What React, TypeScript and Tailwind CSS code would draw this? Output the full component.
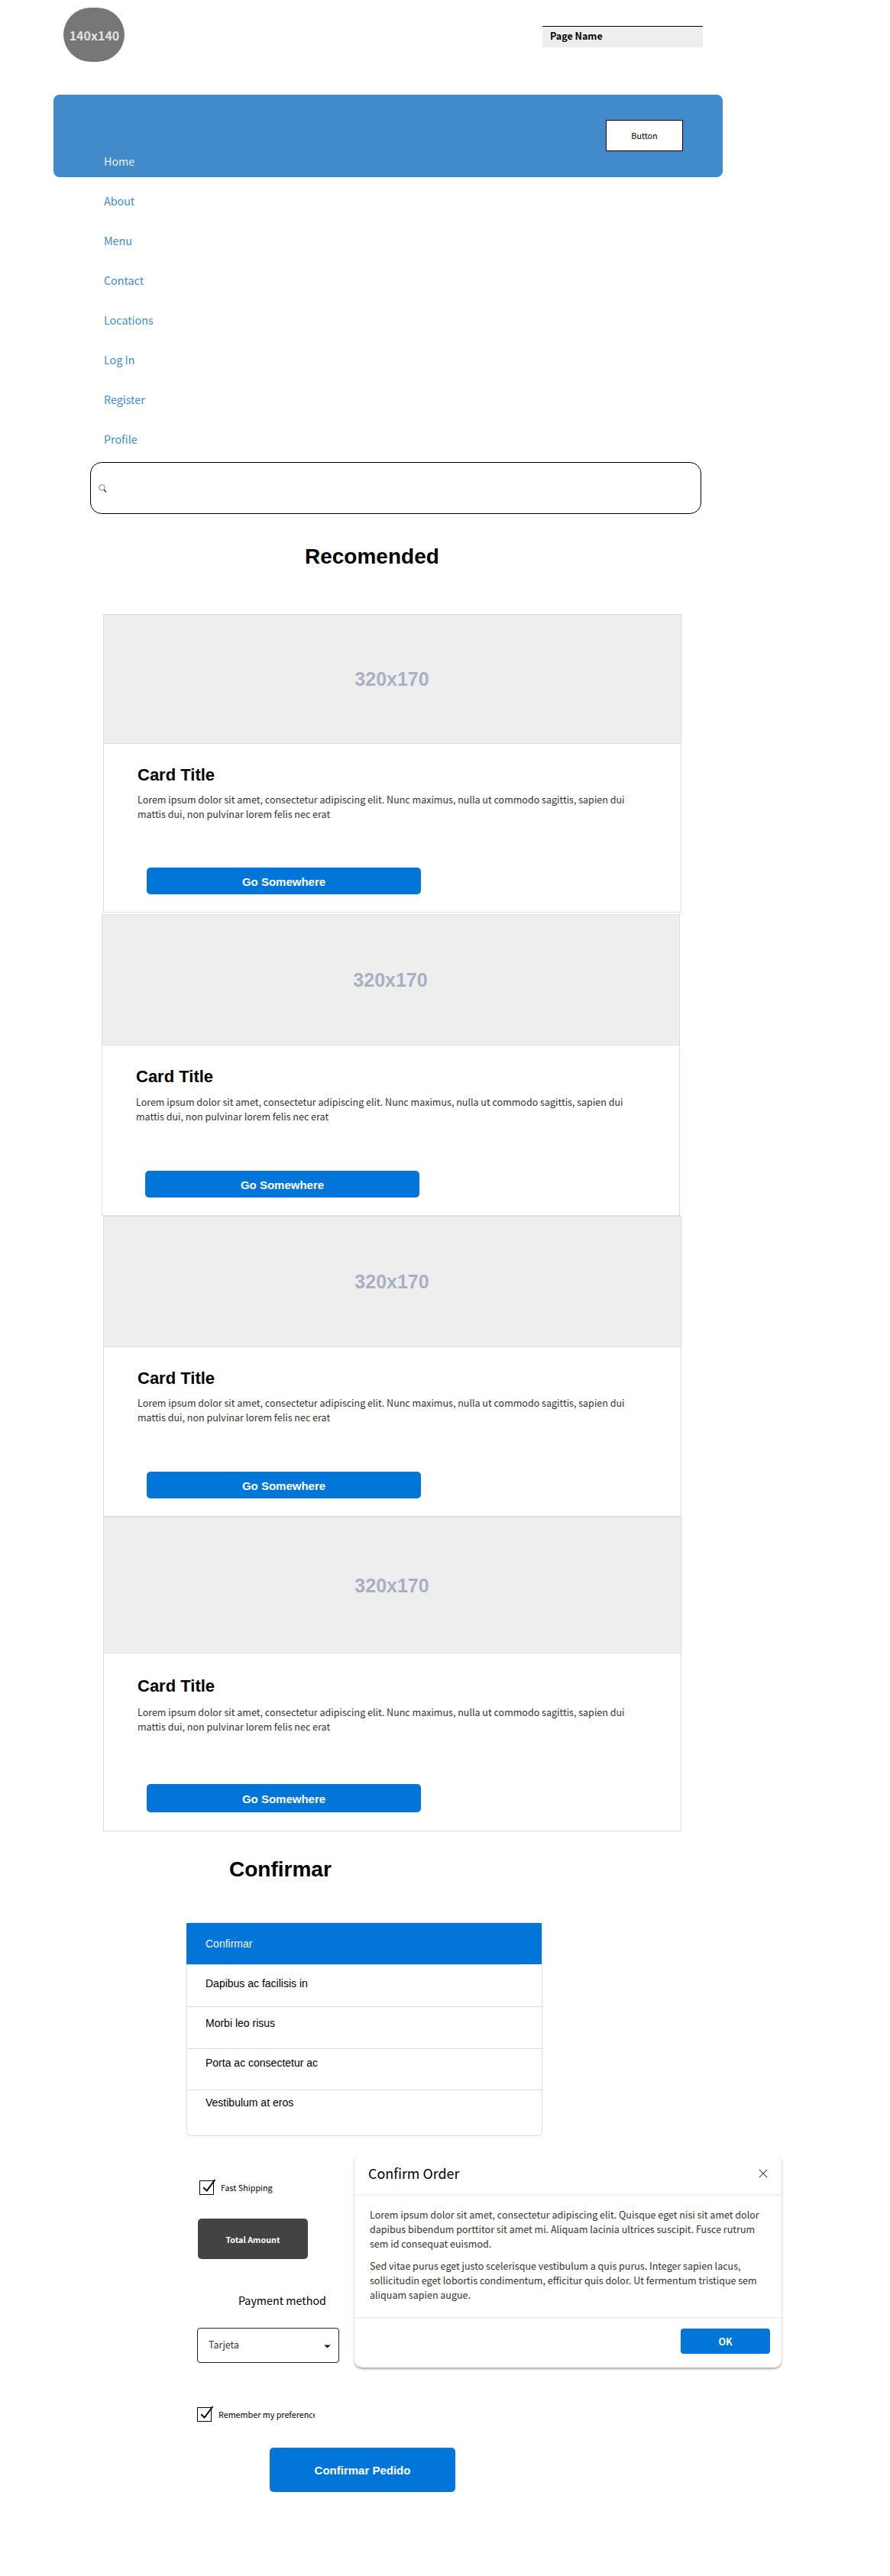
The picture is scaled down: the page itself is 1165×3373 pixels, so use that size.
import React from "react";

const links = ["About", "Menu", "Contact", "Locations", "Log In", "Register", "Profile"];

type CardStyle = {
  box: string;
  image: string;
  title: string;
  body: string;
  button: string;
};

const cards: CardStyle[] = [
  { box: "ml-[135px] h-[391px]", image: "h-[169px]", title: "mt-[28px]", body: "mt-[9px]", button: "mt-[61px] h-[35px] pt-[2px]" },
  { box: "ml-[133px] mt-[2px] h-[395px]", image: "h-[171px]", title: "mt-[28px]", body: "mt-[10px]", button: "mt-[62px] h-[35px] pt-[2px]" },
  { box: "ml-[135px] h-[394px]", image: "h-[171px]", title: "mt-[28px]", body: "mt-[9px]", button: "mt-[62px] h-[35px] pt-[2px]" },
  { box: "ml-[135px] h-[412px]", image: "h-[178px] pt-[1px]", title: "mt-[30px]", body: "mt-[11px]", button: "mt-[66px] h-[37px] pt-[2px]" },
];

function Card({ box, image, title, body, button }: CardStyle) {
  return (
    <article className={`w-[757px] border border-[#dedede] bg-white ${box}`}>
      <div
        className={`flex items-center justify-center border-b border-[#dedede] bg-[#eeeeee] pr-px font-['Liberation_Sans',sans-serif] text-[25px] leading-[30px] font-bold text-[#a9b0c3] ${image}`}
      >
        320x170
      </div>
      <h3 className={`ml-[44px] font-['Liberation_Sans',sans-serif] text-[22px] leading-[26px] font-bold text-black ${title}`}>
        Card Title
      </h3>
      <p className={`ml-[44px] text-[12.53px] leading-[19px] whitespace-nowrap text-[#333333] ${body}`}>
        Lorem ipsum dolor sit amet, consectetur adipiscing elit. Nunc maximus, nulla ut commodo sagittis, sapien dui
        <br />
        mattis dui, non pulvinar lorem felis nec erat
      </p>
      <button
        className={`ml-[56px] flex w-[359px] items-center justify-center rounded-[5px] bg-[#0275d8] font-['Liberation_Sans',sans-serif] text-[15px] leading-[20px] font-bold text-white ${button}`}
      >
        Go Somewhere
      </button>
    </article>
  );
}

function Checkbox({ label }: { label: string }) {
  return (
    <label className="flex h-[19px] w-[154px] items-center overflow-x-clip">
      <span className="relative mr-[9px] h-[19px] w-[19px] shrink-0 border border-black">
        <svg className="absolute -top-[4px] left-0 h-[22px] w-[22px]" viewBox="0 0 22 22" fill="none">
          <path d="M4.2 12.3 8.7 16.6 19.5 2" stroke="#000" strokeWidth="2" />
        </svg>
      </span>
      <span className="text-[10.75px] leading-[16px] whitespace-nowrap text-black">{label}</span>
    </label>
  );
}

const rows = [
  { text: "Dapibus ac facilisis in", cls: "h-[55px] pt-[15px]" },
  { text: "Morbi leo risus", cls: "h-[55px] pt-[12px]" },
  { text: "Porta ac consectetur ac", cls: "h-[54px] pt-[9px]" },
];

export default function App() {
  return (
    <main className="flex h-[3373px] w-[1165px] flex-col overflow-hidden bg-white font-['Noto_Sans_CJK_SC',sans-serif]">
      <header className="flex h-[124px] shrink-0 items-start">
        <div className="mt-[10px] ml-[83px] flex h-[71px] w-[80px] items-center justify-center rounded-full bg-[#777777] pl-px text-[16px] leading-[20px] font-bold text-[#e0e0e0]">
          140x140
        </div>
        <div className="mt-[34px] ml-[547px] h-[28px] w-[210px] border-t border-black bg-[#eeeeee] pt-[2px] pl-[10px] text-[12.53px] leading-[20px] font-bold text-black">
          Page Name
        </div>
      </header>

      <nav className="ml-[70px] flex h-[108px] w-[876px] shrink-0 items-start justify-between rounded-[8px] bg-[#428bca]">
        <ul className="mt-[61px] ml-[66px] text-[14.3px] leading-[52px]">
          <li className="text-[#eeeeee]">Home</li>
          {links.map((l) => (
            <li key={l} className="text-[#428bca]">
              {l}
            </li>
          ))}
        </ul>
        <button className="mt-[33px] mr-[52px] flex h-[41px] w-[101px] items-center justify-center border border-black bg-white text-[10.75px] leading-[16px] text-black">
          Button
        </button>
      </nav>

      <div className="mt-[373px] ml-[118px] flex h-[68px] w-[800px] shrink-0 items-center rounded-[15px] border border-black pl-[10px]">
        <svg className="h-[11px] w-[11px]" viewBox="0 0 12 12" fill="none">
          <circle cx="4.8" cy="4.8" r="4.1" stroke="#666" strokeWidth="0.9" />
          <path d="M7.6 7.8 11 11.4" stroke="#222" strokeWidth="1.5" />
        </svg>
      </div>

      <h1 className="mt-[40px] ml-[399px] shrink-0 font-['Liberation_Sans',sans-serif] text-[28px] leading-[32px] font-bold text-black">
        Recomended
      </h1>

      <section className="mt-[59px] flex shrink-0 flex-col">
        {cards.map((c, i) => (
          <Card key={i} {...c} />
        ))}
      </section>

      <h1 className="mt-[34px] ml-[300px] shrink-0 font-['Liberation_Sans',sans-serif] text-[28px] leading-[32px] font-bold text-black">
        Confirmar
      </h1>

      <section className="mt-[53px] ml-[244px] h-[280px] w-[466px] shrink-0 rounded-[6px] border border-[#dddddd] font-['Liberation_Sans',sans-serif] text-[14px] leading-[18px] text-black">
        <div className="-ml-px h-[54px] w-[465px] bg-[#0275d8] pt-[18px] pl-[25px] text-[#f0f6fc]">Confirmar</div>
        <div className="-ml-px h-px w-[436px] bg-[#dddddd]" />
        {rows.map((r) => (
          <div key={r.text} className={`ml-px w-[465px] border-b border-[#dddddd] pl-[23px] ${r.cls}`}>
            {r.text}
          </div>
        ))}
        <div className="ml-px pt-[7px] pl-[23px]">Vestibulum at eros</div>
      </section>

      <section className="mt-[23px] flex shrink-0 items-start">
        <div className="flex w-[464px] flex-col items-start">
          <div className="mt-[35px] ml-[261px]">
            <Checkbox label="Fast Shipping" />
          </div>
          <button className="mt-[31px] ml-[259px] flex h-[53px] w-[144px] items-center justify-center rounded-[5px] bg-[#434343] pt-[2px] text-[10.75px] leading-[16px] font-bold text-white">
            Total Amount
          </button>
          <div className="mt-[43px] ml-[312px] text-[14.3px] leading-[22px] text-black">Payment method</div>
          <div className="mt-[25px] ml-[258px] flex h-[46px] w-[186px] items-center justify-between rounded-[4px] border border-[#222222] pr-[10px] pb-[2px] pl-[14px] text-[12.53px] leading-[20px] text-[#333333]">
            Tarjeta
            <svg className="mt-[5px] h-[5px] w-[9px]" viewBox="0 0 9 5">
              <path d="M0 0.5h9L4.5 4.5z" fill="#222" />
            </svg>
          </div>
          <div className="mt-[58px] ml-[258px]">
            <Checkbox label="Remember my preference" />
          </div>
          <button className="mt-[34px] ml-[353px] flex h-[58px] w-[243px] items-center justify-center rounded-[5px] bg-[#0275d8] pt-[2px] font-['Liberation_Sans',sans-serif] text-[15px] leading-[20px] font-bold text-white">
            Confirmar Pedido
          </button>
        </div>

        <div className="h-[280px] w-[559px] rounded-[10px] bg-white shadow-[0_2px_3px_rgba(0,0,0,0.35)]">
          <div className="flex h-[55px] items-start justify-between border-b-2 border-[#f2f2f2] pr-[18px] pl-[18px]">
            <h2 className="mt-[11px] text-[17.9px] leading-[28px] text-black">Confirm Order</h2>
            <svg className="mt-[20px] h-[12px] w-[12px]" viewBox="0 0 12 12" fill="none">
              <path d="M0.8 0.8 11.2 11.2M11.2 0.8 0.8 11.2" stroke="#444" strokeWidth="1.1" />
            </svg>
          </div>
          <div className="flex h-[161px] flex-col gap-[10px] border-b-2 border-[#f2f2f2] pt-[15px] pl-[20px] text-[12.53px] leading-[19px] whitespace-nowrap text-[#333333]">
            <p>
              Lorem ipsum dolor sit amet, consectetur adipiscing elit. Quisque eget nisi sit amet dolor
              <br />
              dapibus bibendum porttitor sit amet mi. Aliquam lacinia ultrices suscipit. Fusce rutrum
              <br />
              sem id consequat euismod.
            </p>
            <p>
              Sed vitae purus eget justo scelerisque vestibulum a quis purus. Integer sapien lacus,
              <br />
              sollicitudin eget lobortis condimentum, efficitur quis dolor. Ut fermentum tristique sem
              <br />
              aliquam sapien augue.
            </p>
          </div>
          <button className="mt-[13px] ml-[427px] flex h-[33px] w-[117px] items-center justify-center rounded-[4px] bg-[#0275d8] text-[12.53px] leading-[20px] font-bold text-white">
            OK
          </button>
        </div>
      </section>
    </main>
  );
}
